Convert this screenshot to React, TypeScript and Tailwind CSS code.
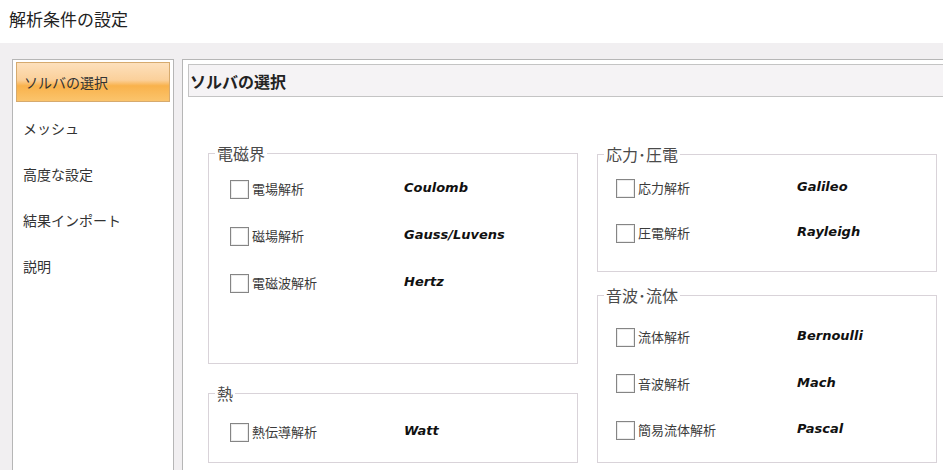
const jp = "font-['Noto_Sans_CJK_JP','Noto_Sans',sans-serif]"
const latin = "font-['DejaVu_Sans',sans-serif]"

const menu = ["ソルバの選択", "メッシュ", "高度な設定", "結果インポート", "説明"]

type Solver = { label: string; name: string }

type Group = {
  title: string
  solvers: Solver[]
  box: string
  list: string
  row: string
  labelWidth: string
  indent: string
}

const leftGroups: Group[] = [
  {
    title: "電磁界",
    box: "h-[211px]",
    list: "pt-[12px]",
    row: "h-[47px]",
    labelWidth: "w-[152px]",
    indent: "pl-[21px]",
    solvers: [
      { label: "電場解析", name: "Coulomb" },
      { label: "磁場解析", name: "Gauss/Luvens" },
      { label: "電磁波解析", name: "Hertz" },
    ],
  },
  {
    title: "熱",
    box: "h-[70px]",
    list: "pt-[15px]",
    row: "h-[46px]",
    labelWidth: "w-[152px]",
    indent: "pl-[21px]",
    solvers: [{ label: "熱伝導解析", name: "Watt" }],
  },
]

const rightGroups: Group[] = [
  {
    title: "応力･圧電",
    box: "h-[118px]",
    list: "pt-[11px]",
    row: "h-[45px]",
    labelWidth: "w-[159px]",
    indent: "pl-[18px]",
    solvers: [
      { label: "応力解析", name: "Galileo" },
      { label: "圧電解析", name: "Rayleigh" },
    ],
  },
  {
    title: "音波･流体",
    box: "h-[168px]",
    list: "pt-[18px]",
    row: "h-[46.5px]",
    labelWidth: "w-[159px]",
    indent: "pl-[18px]",
    solvers: [
      { label: "流体解析", name: "Bernoulli" },
      { label: "音波解析", name: "Mach" },
      { label: "簡易流体解析", name: "Pascal" },
    ],
  },
]

const GroupBox = ({ group }: { group: Group }) => (
  <div className={`relative border border-[#d9d3d9] ${group.box}`}>
    <span className={`absolute -top-[11px] left-[6px] bg-white px-[2px] text-[16px] leading-[20px] text-[#4a4a4a] ${jp}`}>
      {group.title}
    </span>
    <div className={`flex flex-col ${group.list} ${group.indent}`}>
      {group.solvers.map((s) => (
        <div key={s.label} className={`flex items-center ${group.row}`}>
          <span className="h-[19px] w-[19px] shrink-0 border border-[#858585] bg-white shadow-[inset_0_0_0_1px_#ececec]" />
          <span className={`ml-[3px] -mt-[1px] text-[13px] text-[#3a3a3a] ${jp} ${group.labelWidth}`}>
            {s.label}
          </span>
          <span className={`-mt-[3px] text-[13px] font-bold italic text-[#111] ${latin}`}>
            {s.name}
          </span>
        </div>
      ))}
    </div>
  </div>
)

export default function App() {
  return (
    <div className="flex h-[470px] w-[943px] flex-col overflow-hidden bg-white">
      <div className={`flex h-[43px] shrink-0 items-center pl-[9px] pb-[6px] text-[17px] text-[#222] ${jp}`}>
        解析条件の設定
      </div>

      <div className="flex flex-1 gap-[8px] bg-[#f1eff1] pl-[12px] pt-[16px]">
        {/* left menu */}
        <div className="flex w-[162px] flex-col gap-[6px] border border-b-0 border-[#b6b6b6] bg-white px-[3px] pt-[2px]">
          {menu.map((item, i) => (
            <div
              key={item}
              className={clsx(
                "flex h-[40px] items-center pl-[7px] text-[14px] text-[#333]",
                jp,
                i === 0 &&
                  "border border-[#d6aa6e] bg-[linear-gradient(to_bottom,#fde0bc_0%,#fbd09a_45%,#f9b24c_60%,#fbc46c_100%)]"
              )}
            >
              {item}
            </div>
          ))}
        </div>

        {/* main panel */}
        <div className="flex flex-1 flex-col border-l border-t border-[#b6b6b6] bg-white pl-[5px] pt-[4px]">
          <div className={`flex h-[33px] items-center border border-r-0 border-[#c4c4c4] bg-[#f5f3f5] pl-[1px] text-[16px] font-bold text-[#222] ${jp}`}>
            ソルバの選択
          </div>

          <div className="mt-[56px] grid grid-cols-[370px_340px] gap-x-[19px] pl-[20px]">
            <div className="flex flex-col gap-[29px]">
              {leftGroups.map((g) => (
                <GroupBox key={g.title} group={g} />
              ))}
            </div>
            <div className="mt-[1px] flex flex-col gap-[23px]">
              {rightGroups.map((g) => (
                <GroupBox key={g.title} group={g} />
              ))}
            </div>
          </div>
        </div>
      </div>
    </div>
  )
}

import clsx from "clsx"
